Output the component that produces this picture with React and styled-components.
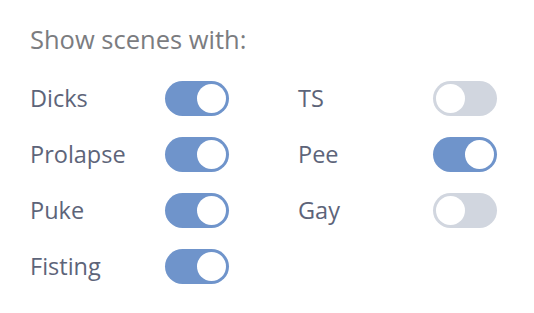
import React from 'react'
import styled, { createGlobalStyle } from 'styled-components'

const GlobalStyle = createGlobalStyle`
  html, body {
    margin: 0;
    padding: 0;
    background: #ffffff;
  }
`;

const Panel = styled.div`
  width: 534px;
  height: 313px;
  box-sizing: border-box;
  padding: 21px 0 0 30px;
  font-family: "Open Sans", "Liberation Sans", sans-serif;
`;

const Heading = styled.div`
  font-size: 25.5px;
  line-height: 36px;
  color: #7b7c80;
`;

const Grid = styled.div`
  display: grid;
  grid-template-columns: 135px 133px 135px 64px;
  grid-auto-rows: 36px;
  row-gap: 20px;
  margin-top: 23px;
  align-items: center;
`;

const Label = styled.div`
  font-size: 23.5px;
  color: #5d6479;
  line-height: 36px;
`;

const Track = styled.div`
  width: 64px;
  height: 35px;
  border-radius: 18px;
  background: ${p => (p.$on ? '#6f94cb' : '#d1d6df')};
  display: flex;
  align-items: center;
  justify-content: ${p => (p.$on ? 'flex-end' : 'flex-start')};
  padding: 0 3px;
  box-sizing: border-box;
`;

const Knob = styled.div`
  width: 29px;
  height: 29px;
  border-radius: 50%;
  background: #ffffff;
`;

const Spacer = styled.div``;

const items = [
  ['Dicks', true, 'TS', false],
  ['Prolapse', true, 'Pee', true],
  ['Puke', true, 'Gay', false],
  ['Fisting', true],
]

const Toggle = ({ on }) => (
  <Track $on={on}>
    <Knob />
  </Track>
)

export default function App() {
  return (
    <>
      <GlobalStyle />
      <Panel>
        <Heading>Show scenes with:</Heading>
        <Grid>
          {items.map(([a, aOn, b, bOn]) => (
            <React.Fragment key={a}>
              <Label>{a}</Label>
              <Toggle on={aOn} />
              {b ? (
                <>
                  <Label>{b}</Label>
                  <Toggle on={bOn} />
                </>
              ) : (
                <>
                  <Spacer />
                  <Spacer />
                </>
              )}
            </React.Fragment>
          ))}
        </Grid>
      </Panel>
    </>
  )
}
